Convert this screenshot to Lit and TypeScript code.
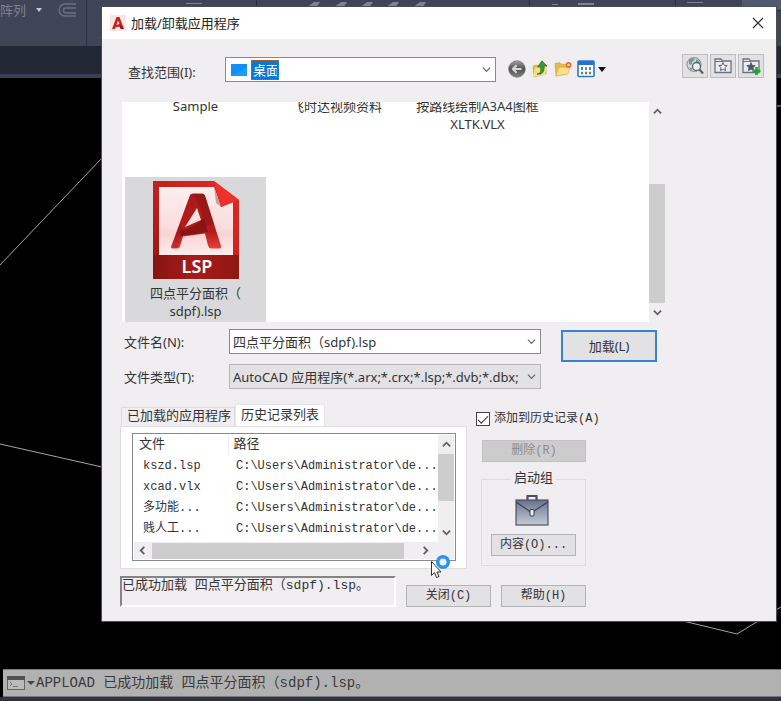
import { LitElement, html, css, svg } from "lit";
import { customElement, state } from "lit/decorators.js";

const chevron = (cls: string, d: string) =>
  html`<svg class=${cls} viewBox="0 0 10 10" aria-hidden="true"><path d=${d} /></svg>`;
const DOWN = "M1 3 L5 7 L9 3";
const UP = "M1 7 L5 3 L9 7";
const LEFT = "M7 1 L3 5 L7 9";
const RIGHT = "M3 1 L7 5 L3 9";

const HISTORY = [
  { name: "kszd.lsp", path: "C:\\Users\\Administrator\\de..." },
  { name: "xcad.vlx", path: "C:\\Users\\Administrator\\de..." },
  { name: "多功能...", path: "C:\\Users\\Administrator\\de..." },
  { name: "贱人工...", path: "C:\\Users\\Administrator\\de..." },
];

const iconBack = svg`<svg viewBox="0 0 18 18" width="18" height="18">
  <defs><linearGradient id="g" x1="0" y1="0" x2="0" y2="1"><stop offset="0" stop-color="#a2a2a2"/><stop offset=".5" stop-color="#505050"/><stop offset="1" stop-color="#858585"/></linearGradient></defs>
  <circle cx="9" cy="9" r="8.3" fill="url(#g)" stroke="#666" stroke-width=".6"/>
  <path d="M13.500 9H5M8.600 5.200 4.800 9l3.800 3.800" fill="none" stroke="#d8d8d8" stroke-width="2"/></svg>`;

const iconUp = svg`<svg viewBox="0 0 18 18" width="18" height="18">
  <path d="M2 6l4-1 1 1 8-1v9l-12 3z" fill="#e9bf4c" stroke="#c99a2e" stroke-width=".6"/>
  <path d="M2 17l2-9 12-2-2 9z" fill="#f8df86"/>
  <path d="M6 14c4 0 4-4 3.600-7H6.500L11 .8l5 5.200h-3c.5 5-1 9-7 8z" fill="#3c9a35" stroke="#1d6b1c" stroke-width=".7"/></svg>`;

const iconNew = svg`<svg viewBox="0 0 18 18" width="18" height="18">
  <path d="M1 3.500l5-.8 1.500 1.500 6 .3v9L2 16z" fill="#e8ba4c" stroke="#cb9b38" stroke-width=".6"/>
  <path d="M2 16l2.500-8.500L16 7l-2 7z" fill="#fbe08a" stroke="#d8ab4a" stroke-width=".6"/>
  <circle cx="14.500" cy="5" r="3" fill="#ef6c34"/><circle cx="14.500" cy="5" r="1.300" fill="#ffd5a0"/></svg>`;

const iconViews = svg`<svg viewBox="0 0 18 18" width="18" height="18">
  <rect x="1" y="1" width="16" height="15.500" rx="1" fill="#fff" stroke="#2f74c8" stroke-width="1.600"/>
  <rect x="1" y="1" width="16" height="4" fill="#2573cf"/>
  <path d="M4 8.500h2M12 8.500h2" stroke="#3f8ccc" stroke-width="3"/><path d="M4 13h2M12 13h2" stroke="#3d9d57" stroke-width="2.600"/><path d="M8 13h2" stroke="#c5564a" stroke-width="2.600"/><path d="M8 8.500h2" stroke="#7a86c6" stroke-width="3"/></svg>`;

const iconGlobe = svg`<svg viewBox="0 0 20 20" width="20" height="20">
  <circle cx="9" cy="8.500" r="7" fill="#d3dade" stroke="#8d979c" stroke-width="1.200"/>
  <path d="M4 4c2-2 5-2 6-1 0 2-3 2-3 4s-2 2-3 1zM11 3l4 3-1 2-3-1zM4 11l3 1v3z" fill="#7b9799"/>
  <circle cx="11.500" cy="10.500" r="4" fill="#eef1f3" stroke="#5b6369" stroke-width="1.300"/>
  <path d="M14.500 13.500l3.500 4" stroke="#5b6369" stroke-width="2.200"/></svg>`;

const folderStar = (filled: boolean) => svg`<svg viewBox="0 0 20 20" width="20" height="20">
  <path d="M2 16.500V3h6l1.500 2H18v11.500z" fill="#e9ebee" stroke="#6c7480" stroke-width="1.300"/>
  <path d="M2 5.500h8" stroke="#6c7480" stroke-width="1"/>
  <path d="M10 6.600l1.200 2.800 3 .2-2.300 2 .7 3-2.600-1.600-2.600 1.600.7-3-2.300-2 3-.2z" fill=${filled ? "#4d5563" : "#fff"} stroke="#4d5563" stroke-width=".9"/>
  ${filled ? svg`<path d="M15.500 11v8M11.500 15h8" stroke="#22a32b" stroke-width="2.600"/>` : ""}</svg>`;

const logo = svg`<svg viewBox="0 0 16 16" width="16" height="16">
  <rect width="16" height="16" fill="#fbe6e3"/>
  <path d="M2 14L6.500 2h3L14 14h-3.300l-.7-2.300L5.700 12.300 5 14zM8 5.500L6.500 10l3-1z" fill="#c5241f" fill-rule="evenodd"/>
  <path d="M9.500 9L14 14h-3.300l-.9-3z" fill="#8e1614"/></svg>`;

const lspIcon = svg`<svg class="lsp" viewBox="0 0 86 98" role="img" aria-label="LSP">
  <defs>
    <linearGradient id="red" x1="1" y1="0" x2="0" y2="1"><stop offset="0" stop-color="#e52a25"/><stop offset=".5" stop-color="#c4201c"/><stop offset="1" stop-color="#8e1614"/></linearGradient>
    <linearGradient id="paper" x1="0" y1="0" x2="0" y2="1"><stop offset="0" stop-color="#fdeeee"/><stop offset=".6" stop-color="#fadcdc"/><stop offset=".68" stop-color="#f9d3d3"/><stop offset="1" stop-color="#fdecec"/></linearGradient>
    <linearGradient id="leg" x1="0" y1="0" x2="0" y2="1"><stop offset="0" stop-color="#a81b1a"/><stop offset=".7" stop-color="#b61c1b"/><stop offset="1" stop-color="#e8403a"/></linearGradient>
    <linearGradient id="base" x1="0" y1="0" x2="1" y2="0"><stop offset="0" stop-color="#861512"/><stop offset=".5" stop-color="#a81c18"/><stop offset="1" stop-color="#8f1613"/></linearGradient>
  </defs>
  <path d="M0 0h61l25 19v79H0z" fill="url(#red)"/>
  <path d="M0 74h86v24H0z" fill="url(#base)"/>
  <path d="M6 6h55l7 20 12-5v53H6z" fill="url(#paper)"/>
  <path d="M61 5l7 21-5-4z" fill="#c4a2a0"/>
  <path d="M61 0l25 19-18 7z" fill="#ef302b"/>
  <path d="M18 66L37 14q1-1.500 3-1.500h9q2 0 3 2L68 65q.5 2.500-2 2.500h-8q-2 0-3-3l-3-12-22 3-3 10q-.5 2-3 2h-4q-2.500 0-2-1.500zM44 27l-12 19 16-7z" fill="url(#leg)" fill-rule="evenodd"/>
  <path d="M27 50q14-3 24-13l4 14-27 4z" fill="#8a1415"/>
  <path d="M40 13h9q2 0 3 2l9 28-7 2-9-23z" fill="#8c1516" opacity=".6"/>
  <path d="M18 66l9-24 4 8-7 17h-4z" fill="#7e1415" opacity=".3"/>
  <text x="44" y="92" text-anchor="middle" class="lsp-text">LSP</text></svg>`;

const briefcase = svg`<svg class="case" viewBox="0 0 34 32" aria-hidden="true">
  <defs><linearGradient id="bc" x1="0" y1="0" x2="0" y2="1"><stop offset="0" stop-color="#67708a"/><stop offset=".5" stop-color="#98a1b4"/><stop offset="1" stop-color="#c3cad6"/></linearGradient></defs>
  <path d="M12.500 6V2h9v4" fill="none" stroke="#4b5060" stroke-width="2.200"/>
  <rect x="1" y="6" width="32" height="25" fill="url(#bc)" stroke="#4d5363" stroke-width="1.200"/>
  <path d="M1 8l15.500 10.500L33 8" fill="none" stroke="#3c4256" stroke-width="1.200"/>
  <rect x="15" y="15.500" width="4" height="6.500" rx="1" fill="#eceef2" stroke="#33394a"/></svg>`;

@customElement("app-root")
export class AppRoot extends LitElement {
  @state() private addToHistory = true;

  static styles = css`
    :host {
      display: block;
      --ui: "Noto Sans", "Noto Sans CJK SC", sans-serif;
      --mono: "Liberation Mono", "Noto Sans CJK SC", monospace;
      font: 13px/18px var(--ui);
      color: #333335;
    }
    * { box-sizing: border-box; }
    button, input, select { font: inherit; color: inherit; margin: 0; padding: 0; border-radius: 0; }
    svg { display: block; flex: none; }

    .desktop { position: relative; display: flex; flex-direction: column; min-height: 100vh; background: #000; overflow: hidden; }
    .ribbon { display: flex; height: 46px; background: #3f4557; color: #7c8290; overflow: hidden; }
    .ribbon-group { display: flex; gap: 10px; width: 87px; border-right: 1px solid #2b303d; }
    .ribbon-group span { margin-top: 1px; }
    .ribbon-group .tri { margin-top: 8px; }
    .ribbon-group .clip { margin: 3px 0 0 5px; }
    .hints { flex: 1; height: 8px; }
    .edge { width: 39px; height: 11px; background: #525a72; border-bottom: 1px solid #2b303d; }
    .filetabs { height: 32px; background: #222833; border-bottom: 4px solid #383f50; }
    .canvas { flex: 1; }
    .drawing { position: absolute; left: 0; top: 0; width: 100%; height: 100%; pointer-events: none; }
    .drawing path { fill: none; stroke: #a5a5a5; stroke-width: 1; }

    .command { display: flex; align-items: center; height: 28px; margin-left: 3px; padding-left: 4px; background: #b1b1b1; border-top: 1px solid #777; border-bottom: 1px solid #777; font: 14px/20px var(--mono); color: #3a3a3a; }
    .footer { height: 4px; background: #2d3448; }

    .dialog { position: absolute; left: 102px; right: 5px; top: 7px; background: #f0eef1; outline: 1px solid #4b4d55; padding-bottom: 14px; }
    .titlebar { display: flex; align-items: center; gap: 5px; height: 32px; padding: 0 11px 0 8px; background: #fff; }
    .titlebar h1 { flex: 1; margin: 0; font: inherit; color: #222; }
    .close { width: 14px; height: 14px; border: 0; background: none; }
    .close path { fill: none; stroke: #333; stroke-width: 1.200; }

    .lookin { display: flex; align-items: flex-start; height: 55px; padding: 15px 12px 0 26px; }
    .lookin > label { width: 97px; padding-top: 9px; }
    .combo { display: flex; align-items: center; height: 25px; border: 1px solid #8a8a8c; background: #fff; }
    .combo .chev { margin: 0 4px 0 auto; }
    .chev { width: 9px; height: 9px; }
    .chev path { fill: none; stroke: #666; stroke-width: 1.300; }
    .place { flex: 1; padding-left: 5px; margin-top: 3px; gap: 4px; }
    .place select { appearance: none; width: 28px; height: 20px; padding: 0 1px; border: 1px dotted #b36a2c; background: #0a78d7; color: #fff; }
    .tools { display: flex; margin: 6px 75px 0 12px; gap: 5px; }
    .tools button, .pins button { display: flex; align-items: center; justify-content: center; border: 0; background: none; }
    .pins { display: flex; gap: 2px; }
    .pins button { width: 26px; height: 24px; border: 1px solid #bdbdbf; background: #e2e1e3; }

    .browser { display: flex; height: 220px; margin: 8px 111px 0 20px; }
    .files { flex: 1; overflow: hidden; background: #fff; padding-left: 3px; }
    .icons { display: grid; grid-template-columns: repeat(3, 141px); grid-template-rows: 80px 145px; margin-top: -5px; line-height: 18px; text-align: center; color: #333; }
    .icons .selected { display: flex; flex-direction: column; align-items: center; background: #d9d9db; padding-top: 4px; }
    .lsp { width: 86px; height: 98px; margin-bottom: 5px; }
    .lsp-text { font: 600 18px "Noto Sans", sans-serif; fill: #fff; }
    .vbar { display: flex; flex-direction: column; align-items: center; width: 16px; }
    .vbar .chev { margin: 5px 0; }
    .sbar path { stroke: #606060; stroke-width: 2; }
    .vbar .thumb { width: 16px; background: #cdcdcd; }
    .browser .gap { flex: 63; }
    .browser .thumb { flex: 119; }

    .open { display: flex; gap: 20px; margin: 7px 119px 0 22px; }
    .fields { flex: 1; display: grid; grid-template-columns: 105px 1fr; row-gap: 10px; align-items: center; }
    .fields .combo { padding-left: 3px; }
    .fields input, .fields select { flex: 1; min-width: 0; border: 0; background: none; appearance: none; outline: 0; height: 22px; }
    .fields select { padding-right: 4px; }
    .fields .type { background: #e2e1e3; border-color: #b5b5b7; }
    .load { width: 96px; height: 32px; margin-top: 1px; border: 2px solid #3584cd; background: #e2e1e3; }

    .lower { margin: 15px 190px 0 18px; font: 12px/18px var(--mono); }
    .upper { display: flex; gap: 9px; }
    .tabs { flex: 1; min-width: 0; }
    .tablist { display: flex; align-items: flex-end; height: 22px; padding-left: 1px; }
    .tablist button { height: 19px; border: 1px solid #dcdcde; border-bottom: 0; background: #f0eef1; padding: 0 3px 0 5px; font-size: 13px; white-space: nowrap; }
    .tablist .on { height: 22px; padding: 0 5px; background: #fff; border-color: #e4e4e6; }
    .panel { background: #fff; border: 1px solid #dcdcde; padding: 6px 10px 8px 11px; height: 143px; }
    .listbox { display: flex; flex-direction: column; height: 128px; border: 1px solid #868a91; padding: 1px; }
    .rows { display: flex; flex: 1; min-height: 0; }
    table { flex: 1; border-collapse: collapse; table-layout: fixed; width: 100px; align-self: flex-start; }
    th { height: 20px; padding: 0 0 0 5px; text-align: left; font-weight: normal; font-size: 13px; }
    th:first-child { width: 94px; border-right: 1px solid #eee; }
    td { height: 21px; padding: 0 0 0 9px; white-space: nowrap; }
    td + td { padding-left: 8px; }
    .history { background: #f0eef1; }
    .history .thumb { height: 47px; margin-bottom: auto; }
    .hbar { display: flex; align-items: center; height: 17px; padding: 0 24px 0 4px; gap: 5px; background: #f0eef1; }
    .hbar .thumb { flex: 1; height: 16px; margin-right: 12px; background: #cdcdcd; }

    .side { width: 110px; display: flex; flex-direction: column; padding-top: 6px; }
    .check { display: flex; align-items: center; gap: 4px; white-space: nowrap; }
    .check input { appearance: none; width: 14px; height: 14px; border: 1px solid #444; background: #fff; display: grid; place-items: center; flex: none; }
    .check input:checked::before { content: ""; width: 9px; height: 4px; border: solid #333; border-width: 0 0 1px 1px; rotate: -45deg; translate: 0 -1px; }
    .btn { height: 22px; border: 1px solid #b3b3b5; background: #e2e1e3; text-align: center; }
    .btn:disabled { background: #ccc; border-color: #c2c2c2; color: #8d8d8d; }
    .remove { margin: 12px 0 8px 6px; }
    fieldset { margin: 0 0 0 5px; padding: 5px 9px 9px; border: 1px solid #dcdcde; min-width: 0; display: flex; flex-direction: column; align-items: center; }
    legend { margin: 0 auto; padding: 0 3px; font-size: 13px; }
    .case { width: 34px; height: 32px; margin: 1px 4px 8px 0; }
    fieldset .btn { width: 100%; }
    .bottom { display: flex; align-items: flex-end; gap: 10px; margin-top: 7px; }
    .status { flex: 1; height: 31px; margin: 0; border: 2px solid; border-color: #858585 #fff #fff #858585; font-size: 13px; line-height: 16px; white-space: nowrap; overflow: hidden; }
    .bottom .btn { width: 85px; }
    .pointer { position: absolute; left: 328px; top: 547px; }
  `;

  private get ribbon() {
    return html`<div class="ribbon">
      <div class="ribbon-group">
        <span>阵列</span>
        <svg class="tri" width="6" height="4"><path d="M0 0h6l-3 4z" fill="#c4c8d0" /></svg>
        <svg class="clip" width="20" height="15"><path d="M19 1H8a6 6 0 0 0 0 12h11M19 5H9a2.500 2.500 0 0 0 0 5h10" fill="none" stroke="#697080" stroke-width="1.300" /></svg>
      </div>
      <svg class="hints" height="8"><g fill="#7d8391">
        <path d="M219 8l8-6h6l-4 6zM246 8l8-6h6l-4 6zM272 8l8-6h6l-4 6zM298 8l8-6h6l-4 6zM325 8l8-6h6l-4 6z" />
        <path d="M99 3h16v1H99zM465 4h6v1h-6zM491 3h16v2h-16zM600 2h16v1h-16z" /></g>
        <path d="M169.500 0v8M442.500 0v8M588.500 0v8" stroke="#2b303d" /></svg>
      <div class="edge"></div>
    </div>`;
  }

  private get browser() {
    return html`<div class="browser">
      <div class="files"><div class="icons">
        <div>Sample</div><div>飞时达视频资料</div><div>按路线绘制A3A4图框<br />XLTK.VLX</div>
        <div class="selected">${lspIcon}<span>四点平分面积（<br />sdpf).lsp</span></div>
      </div></div>
      <div class="vbar">${chevron("chev sbar", UP)}<div class="gap"></div><div class="thumb"></div>${chevron("chev sbar", DOWN)}</div>
    </div>`;
  }

  private get history() {
    return html`<div class="tabs">
      <div class="tablist" role="tablist">
        <button role="tab" aria-selected="false">已加载的应用程序</button>
        <button role="tab" aria-selected="true" class="on">历史记录列表</button>
      </div>
      <div class="panel" role="tabpanel"><div class="listbox">
        <div class="rows">
          <table>
            <thead><tr><th>文件</th><th>路径</th></tr></thead>
            <tbody>${HISTORY.map((h) => html`<tr><td>${h.name}</td><td>${h.path}</td></tr>`)}</tbody>
          </table>
          <div class="vbar history">${chevron("chev sbar", UP)}<div class="thumb"></div>${chevron("chev sbar", DOWN)}</div>
        </div>
        <div class="hbar">${chevron("chev sbar", LEFT)}<div class="thumb"></div>${chevron("chev sbar", RIGHT)}</div>
      </div></div>
    </div>`;
  }

  render() {
    return html`<div class="desktop">
      ${this.ribbon}
      <div class="filetabs"></div>
      <div class="canvas"></div>
      <svg class="drawing" aria-hidden="true"><path d="M0 265L102 158M0 444L102 467M683 621L737 634L781 607M776 106h5" /></svg>
      <div class="command">
        <svg width="29" height="16" viewBox="0 0 29 16"><rect x=".5" y="1.500" width="17" height="13" fill="#bbb" stroke="#666" /><path d="M0 1h18v4H0z" fill="#505050" /><path d="M3 7l2 2-2 2M6 11.500h5" fill="none" stroke="#777" /><path d="M20 6h8l-4 4z" fill="#444" /></svg>
        <span>APPLOAD 已成功加载 四点平分面积（sdpf).lsp。</span>
      </div>
      <div class="footer"></div>

      <section class="dialog" role="dialog" aria-labelledby="title">
        <header class="titlebar">${logo}
          <h1 id="title">加载/卸载应用程序</h1>
          <button class="close" aria-label="关闭"><svg width="14" height="14"><path d="M2 2l10 10M12 2L2 12" /></svg></button>
        </header>
        <div class="lookin">
          <label for="place">查找范围(I):</label>
          <div class="combo place">
            <svg width="16" height="12"><rect width="16" height="12" fill="#1090f5" /><path d="M0 12L16 3v9z" fill="#1a9cff" /></svg>
            <select id="place"><option>桌面</option></select>
            ${chevron("chev", DOWN)}
          </div>
          <div class="tools">
            <button aria-label="后退">${iconBack}</button>
            <button aria-label="上一级">${iconUp}</button>
            <button aria-label="新建文件夹">${iconNew}</button>
            <button aria-label="视图">${iconViews}<svg width="12" height="18"><path d="M3 7h8l-4 5z" fill="#111" /></svg></button>
          </div>
          <div class="pins">
            <button aria-label="搜索">${iconGlobe}</button>
            <button aria-label="收藏夹">${folderStar(false)}</button>
            <button aria-label="添加到收藏夹">${folderStar(true)}</button>
          </div>
        </div>
        ${this.browser}
        <div class="open">
          <div class="fields">
            <label for="file">文件名(N):</label>
            <div class="combo"><input id="file" value="四点平分面积（sdpf).lsp" />${chevron("chev", DOWN)}</div>
            <label for="type">文件类型(T):</label>
            <div class="combo type"><select id="type"><option>AutoCAD 应用程序(*.arx;*.crx;*.lsp;*.dvb;*.dbx;</option></select>${chevron("chev", DOWN)}</div>
          </div>
          <button class="load">加载(L)</button>
        </div>
        <div class="lower">
          <div class="upper">
            ${this.history}
            <div class="side">
              <label class="check"><input type="checkbox" .checked=${this.addToHistory}
                @change=${(e: Event) => (this.addToHistory = (e.target as HTMLInputElement).checked)} />添加到历史记录(A)</label>
              <button class="btn remove" disabled>删除(R)</button>
              <fieldset><legend>启动组</legend>${briefcase}<button class="btn">内容(O)...</button></fieldset>
            </div>
          </div>
          <div class="bottom">
            <p class="status">已成功加载 四点平分面积（sdpf).lsp。</p>
            <button class="btn">关闭(C)</button>
            <button class="btn">帮助(H)</button>
          </div>
        </div>
        <svg class="pointer" width="22" height="28" aria-hidden="true">
          <circle cx="13" cy="8" r="5.3" fill="#e6f4ff" stroke="#2e93ea" stroke-width="3.600" />
          <path d="M1.500 7.500v14l3-3 2 5 2.500-1-2-4.500h4z" fill="#fff" stroke="#333" />
        </svg>
      </section>
    </div>`;
  }
}
